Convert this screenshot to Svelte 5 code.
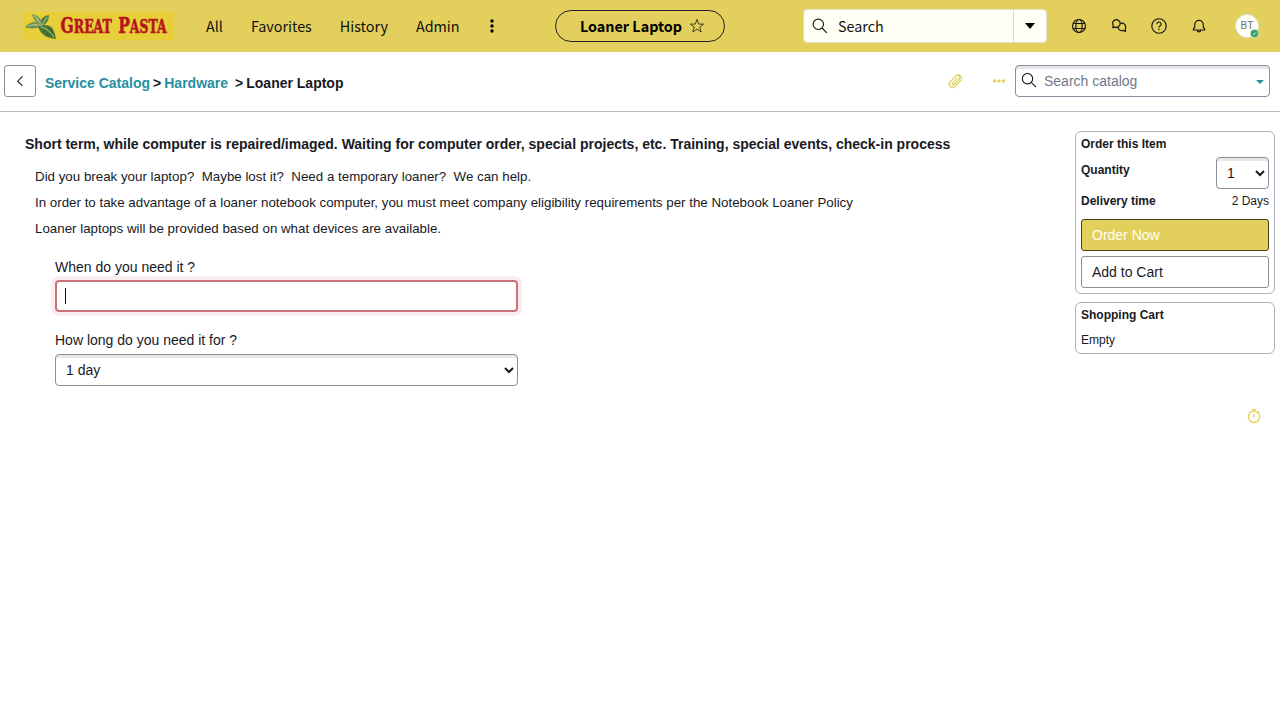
<script>
  const nav = ['All', 'Favorites', 'History', 'Admin'];
  let quantity = $state('1');
  let duration = $state('1 day');
</script>

<div class="page">
  <header>
    <svg class="logo" width="150" height="28" viewBox="0 0 150 28">
      <rect width="150" height="28" fill="#e8cf3a" />
      <path d="M1 15.5Q5 10 11 10L20 14Q11 18 1 15.5Z" fill="#6c8f4c" />
      <path d="M8 2Q17 3 19 14Q10 12 8 2Z" fill="#7c9c5e" />
      <path d="M16 13Q16 4 25 3Q25 11 18 14Z" fill="#54813a" />
      <path d="M14 14Q25 11 29 17Q31 21 32 27Q17 26 14 14Z" fill="#4c7833" />
      <path d="M4 14.5Q11 11 18 14M10 4Q14 7 18 13L23 5M17 15Q25 17 30 25M10 12L13 14M13 6L14 9" fill="none" stroke="#bdcf9c" stroke-width=".9" />
      <path d="M19 18Q23 23 28 24M24 15Q28 19 29 22" fill="none" stroke="#2d5a20" stroke-width=".8" />
      <g transform="scale(.69 1)">
        <text x="53" y="21.5">G<tspan class="small">REAT</tspan></text>
        <text x="136.5" y="21.5">P<tspan class="small">ASTA</tspan></text>
      </g>
    </svg>
    <nav>
      {#each nav as item}<span>{item}</span>{/each}
      <svg width="4" height="14" viewBox="0 0 4 14"><circle cx="2" cy="2" r="1.7" /><circle cx="2" cy="7" r="1.7" /><circle cx="2" cy="12" r="1.7" /></svg>
    </nav>
    <div class="pill">
      <b>Loaner Laptop</b>
      <svg width="16" height="16" viewBox="0 0 16 16" fill="none" stroke="#33301a" stroke-width=".9"><path d="M8 1.4L9.7 6.1H14.7L10.7 9.1L12.2 14L8 11.1L3.8 14L5.3 9.1L1.3 6.1H6.3Z" /></svg>
    </div>
    <div class="search">
      <svg width="16" height="16" viewBox="0 0 16 16" fill="none" stroke="#151515" stroke-width="1.1"><circle cx="6.3" cy="6.3" r="5.2" /><path d="M10 10L14.8 14.8" /></svg>
      <span>Search</span>
      <div class="drop"><i></i></div>
    </div>
    <svg class="globe" width="16" height="16" viewBox="0 0 16 16" fill="none" stroke="#111" stroke-width="1.15"><circle cx="8" cy="8" r="6.5" /><ellipse cx="8" cy="8" rx="3.2" ry="6.5" /><path d="M2 5.5H14M2 10.5H14" /></svg>
    <svg class="chat" width="16" height="16" viewBox="0 0 16 16" fill="none" stroke="#111" stroke-width="1.15" stroke-linejoin="round"><path d="M1.8 9.6L2.3 7.7A3.8 3.8 0 1 1 4.2 9.1Z" /><path d="M9.3 5.4A3.9 3.9 0 0 1 14.3 10.7L14.5 13.5L12.3 12.4A3.9 3.9 0 0 1 6.9 9" /></svg>
    <svg class="help" width="16" height="16" viewBox="0 0 16 16" fill="none" stroke="#111" stroke-width="1.1"><circle cx="8" cy="8" r="7.2" /><path d="M5.9 6.3A2.1 2.1 0 1 1 8.9 8Q8 8.5 8 9.5" /><path d="M8 10.8V12" stroke-width="1.3" /></svg>
    <svg class="bell" width="16" height="16" viewBox="0 0 16 16" fill="none" stroke="#111" stroke-width="1.15"><path d="M2.4 12V10.7L3.7 9.5V6.6A4.3 4.3 0 0 1 12.3 6.6V9.5L13.6 10.7V12Z" /><path d="M6.3 12.2A1.7 1.7 0 0 0 9.7 12.2" /></svg>
    <div class="avatar">BT
      <svg class="status" width="9" height="9" viewBox="0 0 9 9"><circle cx="4.5" cy="4.5" r="4.2" fill="#35a06c" stroke="#e8f4df" stroke-width=".7" /><path d="M2.9 4.6L4 5.6L6.1 3.5" fill="none" stroke="#d8f0e0" /></svg>
    </div>
  </header>

  <div class="bar">
    <button class="back" aria-label="Back"><svg width="8" height="12" viewBox="0 0 8 12" fill="none" stroke="#222" stroke-width="1.1"><path d="M6.4 1.5L1.7 6.2L6.4 10.9" /></svg></button>
    <div class="crumbs"><a href="#catalog">Service Catalog</a><span class="s1">&gt;</span><a href="#hardware">Hardware</a><span class="s2">&gt;</span><span>Loaner Laptop</span></div>
    <svg class="clip" width="16" height="16" viewBox="0 0 16 16" fill="none" stroke="#e2cf5c" stroke-width="1.2" stroke-linecap="round"><path d="M10.3 5.2L5.6 10.1A1 1 0 0 0 7.1 11.6L12 6.5A2.3 2.3 0 0 0 8.7 3.2L3.1 9A3.3 3.3 0 0 0 7.7 13.7L13.3 7.9A3.9 3.9 0 0 0 13.2 2.4A3.6 3.6 0 0 0 9.5 2.3" /></svg>
    <svg class="dots" width="12" height="4" viewBox="0 0 12 4" fill="#e2cf5c"><circle cx="1.7" cy="2" r="1.7" /><circle cx="6" cy="2" r="1.7" /><circle cx="10.3" cy="2" r="1.7" /></svg>
    <div class="catalog">
      <svg width="16" height="16" viewBox="0 0 16 16" fill="none" stroke="#181a1f" stroke-width="1.1"><circle cx="6.5" cy="5.7" r="5.2" /><path d="M10.2 9.4L15 14.2" /></svg>
      <span>Search catalog</span><i></i>
    </div>
  </div>

  <main>
    <section class="item">
      <h1>Short term, while computer is repaired/imaged. Waiting for computer order, special projects, etc. Training, special events, check-in process</h1>
      <div class="description">
        <p>Did you break your laptop?&nbsp; Maybe lost it?&nbsp; Need a temporary loaner?&nbsp; We can help.</p>
        <p>In order to take advantage of a loaner notebook computer, you must meet company eligibility requirements per the Notebook Loaner Policy</p>
        <p>Loaner laptops will be provided based on what devices are available.</p>
      </div>
      <div class="form">
        <label for="when">When do you need it ?</label>
        <div class="field" id="when"><span class="caret"></span></div>
        <label class="second" for="duration">How long do you need it for ?</label>
        <select id="duration" bind:value={duration}><option>1 day</option></select>
      </div>
    </section>
    <aside>
      <div class="card order">
        <b>Order this Item</b>
        <div class="qty"><b>Quantity</b><select aria-label="Quantity" bind:value={quantity}><option>1</option></select></div>
        <div class="delivery"><b>Delivery time</b><span>2 Days</span></div>
        <button class="now">Order Now</button>
        <button>Add to Cart</button>
      </div>
      <div class="card cart"><b>Shopping Cart</b><span>Empty</span></div>
      <svg class="timer" width="14" height="16" viewBox="0 0 14 16" fill="none" stroke="#e2cf5c" stroke-width="1.3"><circle cx="7" cy="8.8" r="5.7" /><path d="M5 1.6H9M7 1.6V3.5M11 4.5L12 3.5M7 6V10" /></svg>
    </aside>
  </main>
</div>

<style>
  :global(body) { background: #fff; overflow: hidden; }
  * { box-sizing: border-box; }
  .page { width: 1280px; height: 718px; font-family: "Liberation Sans", Arial, sans-serif; font-size: 14px; color: #181a1f; }
  svg { display: block; flex: none; }
  header { height: 52px; background: #e2cf5c; display: flex; align-items: center; padding-left: 24px; font-family: "Noto Sans CJK SC", sans-serif; font-size: 14.35px; line-height: 24px; color: #111; }
  .logo text { fill: #b5161d; stroke: #b5161d; stroke-width: .6px; font-family: "DejaVu Serif", serif; font-weight: bold; font-size: 22.5px; }
  .logo .small { font-size: 18px; }
  nav { display: flex; align-items: center; gap: 28px; margin-left: 32px; width: 349px; }
  nav svg { margin-left: 2px; }
  .pill { width: 170px; height: 32px; border: 1px solid #222; border-radius: 16px; display: flex; align-items: center; padding-left: 24px; gap: 7px; white-space: nowrap; color: #000; }
  .pill b { font-weight: 700; }
  .search { width: 244px; height: 34px; margin-left: 78px; background: #fffff6; border: 1px solid #e0dfcf; border-radius: 4px; display: flex; align-items: center; padding-left: 8px; }
  .search span { margin-left: 10px; flex: 1; }
  .drop { width: 33px; height: 32px; border-left: 1px solid #dadada; display: grid; place-items: center; }
  .drop i { border: 5.5px solid transparent; border-top: 6px solid #000; border-bottom: 0; }
  .globe { margin-left: 24px; }
  .chat, .help, .bell { margin-left: 24px; }
  .avatar { width: 24px; height: 24px; margin-left: 28px; border-radius: 50%; background: #fffff6; border: 1px solid #ddd; position: relative; text-align: center; line-height: 22px; font-family: "Liberation Sans", sans-serif; font-size: 10px; color: #666975; }
  .status { position: absolute; right: -1px; bottom: -1px; }
  .bar { height: 60px; border-bottom: 1px solid #bdbdc0; display: flex; align-items: center; padding: 0 10px 2px 4px; }
  .back { width: 32px; height: 32px; border: 1px solid #8e8e92; border-radius: 3px; background: #fff; padding: 0; display: grid; place-items: center; }
  .crumbs { width: 902px; margin: 4px 0 0 9px; font-weight: bold; line-height: 16px; white-space: nowrap; }
  .crumbs a { color: #278fa0; text-decoration: none; }
  .s1 { margin: 0 3px; }
  .s2 { margin: 0 3px 0 7px; }
  .dots { margin-left: 30px; }
  .catalog { width: 255px; height: 32px; margin-left: auto; border: 1px solid #8b8d9c; border-radius: 4px; box-shadow: inset 0 3px #e5e5e8; display: flex; align-items: center; padding: 0 5px; color: #70788a; }
  .catalog span { margin-left: 7px; flex: 1; }
  .catalog i { margin-top: 2px; border: 4px solid transparent; border-top-color: #278fa0; border-bottom: 0; }
  main { display: flex; justify-content: space-between; padding: 19px 5px 0 25px; }
  h1 { font-size: 14px; line-height: 16px; margin: 5px 0 0; white-space: nowrap; }
  .description { padding: 17px 10px 0; font-size: 13.333px; line-height: 16px; }
  p { margin: 0 0 10px; white-space: nowrap; }
  .form { width: 463px; margin: 22px 0 0 30px; }
  label { display: block; line-height: 16px; }
  .field { height: 32px; margin-top: 5px; border: 2px solid #c77478; border-radius: 4px; box-shadow: 0 0 0 4px #f9edef; padding: 6px 8px; }
  .caret { display: block; width: 1px; height: 16px; background: #111; }
  .second { margin-top: 20px; }
  select { display: block; height: 32px; border: 1px solid #8b8d9c; border-radius: 4px; background: #fff; box-shadow: inset 0 3px #e6e8e7; font: inherit; font-size: 14px; color: #181a1f; padding: 0 0 0 6px; }
  #duration { width: 100%; margin-top: 6px; }
  aside { width: 200px; font-size: 12px; }
  .card { border: 1px solid #b0b1bd; border-radius: 6px; padding: 5px; line-height: 14px; }
  .order { height: 163px; }
  .order > b { display: block; }
  .qty { display: flex; justify-content: space-between; margin-top: 6px; }
  .qty b { margin-top: 6px; }
  .qty select { width: 53px; }
  .delivery { display: flex; justify-content: space-between; margin: 5px 0 11px; }
  .card button { display: block; width: 188px; height: 32px; border: 1px solid #8e8e92; border-radius: 3px; background: #fff; font: 14px "Liberation Sans", sans-serif; text-align: left; padding: 0 10px; color: #181a1f; }
  .card .now { background: #e2cf5c; color: #fffff2; border-color: #47411b; margin-bottom: 5px; }
  .cart { height: 52px; margin-top: 8px; display: flex; flex-direction: column; gap: 11px; }
  .timer { margin: 54px 0 0 172px; }
</style>
